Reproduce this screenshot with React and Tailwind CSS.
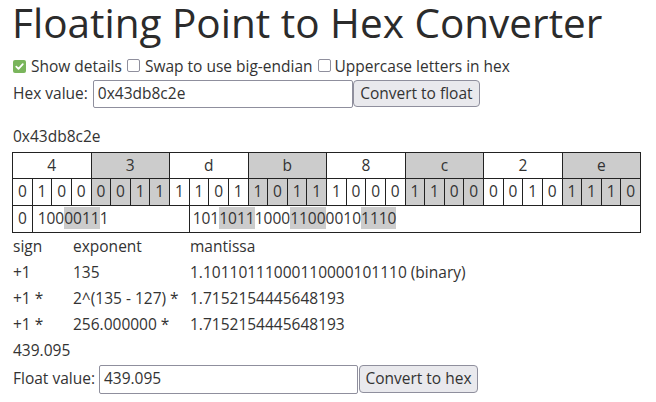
import React from "react";

const hexDigits = ["4", "3", "d", "b", "8", "c", "2", "e"];
const bits = "01000011110110111000110000101110".split("");

function Check({ checked }) {
  if (checked) {
    return (
      <span className="inline-flex items-center justify-center w-[13px] h-[13px] rounded-[2px] bg-[#7ab55c] shrink-0">
        <svg width="11" height="11" viewBox="0 0 11 11">
          <path d="M2.3 5.6 L4.5 7.8 L8.8 3.2" fill="none" stroke="#fff" strokeWidth="1.8" strokeLinecap="round" strokeLinejoin="round" />
        </svg>
      </span>
    );
  }
  return <span className="inline-block w-[13px] h-[13px] rounded-[2px] border border-[#8f8f9d] bg-white shrink-0" />;
}

function HL({ children }) {
  return <span className="bg-[#cccccc]">{children}</span>;
}

export default function App() {
  return (
    <div className="w-[656px] h-[402px] overflow-hidden bg-white px-3 text-[15.5px] text-[#333333] font-['Open_Sans',sans-serif]">
      <h1 className="-mt-[5px] text-[40.5px] leading-[56px] text-[#2b2b2b] font-normal whitespace-nowrap">Floating Point to Hex Converter</h1>

      <div className="mt-[5px] h-[22px] flex items-center">
        <span className="ml-[1px]"><Check checked /></span>
        <span className="ml-[5px]">Show details</span>
        <span className="ml-[5px]"><Check /></span>
        <span className="ml-[5px]">Swap to use big-endian</span>
        <span className="ml-[5px]"><Check /></span>
        <span className="ml-[4px]">Uppercase letters in hex</span>
      </div>

      <div className="mt-[1px] h-[29px] flex items-center">
        <span className="ml-[1px]">Hex value:</span>
        <div className="ml-[5px] w-[260px] h-[28px] border border-[#8f8f9d] rounded-[2px] flex items-center px-[4px]">0x43db8c2e</div>
        <div className="w-[127px] h-[27px] border border-[#8f8f9d] rounded-[4px] bg-[#e9e9ed] flex items-center justify-center">Convert to float</div>
      </div>

      <div className="mt-[18px] h-[22px] flex items-center ml-[1px]">0x43db8c2e</div>

      <table className="mt-[4px] w-[628px] table-fixed border-collapse">
        <colgroup>
          {bits.map((_, i) => (
            <col key={i} className="w-[19.625px]" />
          ))}
        </colgroup>
        <tbody>
          <tr className="h-[26px]">
            {hexDigits.map((h, i) => (
              <td key={i} colSpan={4} className={"border border-[#222] text-center p-0 " + (i % 2 === 1 ? "bg-[#cccccc]" : "")}>{h}</td>
            ))}
          </tr>
          <tr className="h-[27px]">
            {bits.map((b, i) => (
              <td key={i} className={"border border-[#222] text-center p-0 " + (Math.floor(i / 4) % 2 === 1 ? "bg-[#cccccc]" : "")}>{b}</td>
            ))}
          </tr>
          <tr className="h-[27px]">
            <td className="border border-[#222] p-0 pl-[5px]">0</td>
            <td colSpan={8} className="border border-[#222] p-0 pl-[5px]">100<HL>0011</HL>1</td>
            <td colSpan={23} className="border border-[#222] p-0 pl-[3px]">101<HL>1011</HL>1000<HL>1100</HL>0010<HL>1110</HL></td>
          </tr>
        </tbody>
      </table>

      <div className="grid grid-cols-[60px_117px_1fr] auto-rows-[26px] items-center mt-[1px] ml-[1px] whitespace-nowrap">
        <span>sign</span><span>exponent</span><span>mantissa</span>
        <span>+1</span><span>135</span><span>1.10110111000110000101110 (binary)</span>
        <span>+1 *</span><span>2^(135 - 127) *</span><span>1.7152154445648193</span>
        <span>+1 *</span><span>256.000000 *</span><span>1.7152154445648193</span>
      </div>
      <div className="h-[26px] flex items-center ml-[1px]">439.095</div>

      <div className="h-[30px] flex items-center">
        <span className="ml-[1px]">Float value:</span>
        <div className="ml-[4px] w-[259px] h-[29px] border border-[#8f8f9d] rounded-[2px] flex items-center px-[4px]">439.095</div>
        <div className="ml-[1px] w-[119px] h-[28px] border border-[#8f8f9d] rounded-[4px] bg-[#e9e9ed] flex items-center justify-center">Convert to hex</div>
      </div>
    </div>
  );
}
